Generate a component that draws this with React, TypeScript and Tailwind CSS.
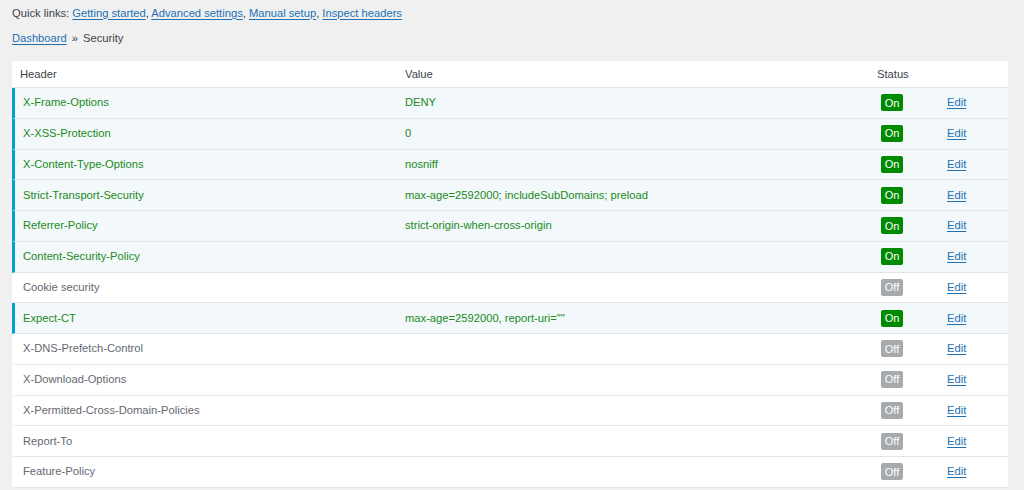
import React from 'react';

type Row = { name: string; value: string; on: boolean };

const ROWS: Row[] = [
  { name: 'X-Frame-Options', value: 'DENY', on: true },
  { name: 'X-XSS-Protection', value: '0', on: true },
  { name: 'X-Content-Type-Options', value: 'nosniff', on: true },
  { name: 'Strict-Transport-Security', value: 'max-age=2592000; includeSubDomains; preload', on: true },
  { name: 'Referrer-Policy', value: 'strict-origin-when-cross-origin', on: true },
  { name: 'Content-Security-Policy', value: '', on: true },
  { name: 'Cookie security', value: '', on: false },
  { name: 'Expect-CT', value: 'max-age=2592000, report-uri=""', on: true },
  { name: 'X-DNS-Prefetch-Control', value: '', on: false },
  { name: 'X-Download-Options', value: '', on: false },
  { name: 'X-Permitted-Cross-Domain-Policies', value: '', on: false },
  { name: 'Report-To', value: '', on: false },
  { name: 'Feature-Policy', value: '', on: false },
];

const Link: React.FC<{ children: React.ReactNode }> = ({ children }) => (
  <a href="#" className="text-[#2271b1] underline underline-offset-2">{children}</a>
);

const StatusBadge: React.FC<{ on: boolean }> = ({ on }) => (
  <span
    className={
      on
        ? 'inline-flex items-center justify-center w-[22px] h-[17px] rounded-[2px] bg-[#008a00] text-white text-[11px]'
        : 'inline-flex items-center justify-center w-[22px] h-[17px] rounded-[2px] bg-[#a7aaad] text-white text-[11px]'
    }
  >
    {on ? 'On' : 'Off'}
  </span>
);

export default function App() {
  return (
    <div className="min-h-[490px] bg-[#f0f0f1] text-[11.2px] text-[#3c434a] pl-3 pr-4" style={{ fontFamily: '"Liberation Sans", Arial, sans-serif' }}>
      {/* Quick links */}
      <div className="h-[26px] flex items-center">
        <span>
          Quick links: <Link>Getting started</Link>, <Link>Advanced settings</Link>, <Link>Manual setup</Link>, <Link>Inspect headers</Link>
        </span>
      </div>

      {/* Breadcrumb */}
      <div className="h-[24px] flex items-center">
        <Link>Dashboard</Link>
        <span className="mx-[5px]">»</span>
        <span>Security</span>
      </div>

      {/* Table */}
      <div className="mt-[11px] bg-white">
        <div className="flex items-center h-[27px] border-b border-[#e2e4e7] text-[#3c434a]">
          <div className="w-[393px] pl-2">Header</div>
          <div className="w-[472px]">Value</div>
          <div className="w-[70px]">Status</div>
          <div className="flex-1"></div>
        </div>
        {ROWS.map((row) => (
          <div
            key={row.name}
            className={
              row.on
                ? 'flex items-center h-[30.75px] border-l-[3px] border-l-[#00a0d2] border-b border-b-[#dde5ec] bg-[#f3f8fb] text-[#1a8a1a]'
                : 'flex items-center h-[30.75px] border-l-[3px] border-l-white border-b border-b-[#e6e6e6] bg-white text-[#646970]'
            }
          >
            <div className="w-[390px] pl-2">{row.name}</div>
            <div className="w-[472px]">{row.value}</div>
            <div className="w-[70px] pl-[4px] flex">
              <StatusBadge on={row.on} />
            </div>
            <div className="flex-1">
              <Link>Edit</Link>
            </div>
          </div>
        ))}
      </div>
    </div>
  );
}
